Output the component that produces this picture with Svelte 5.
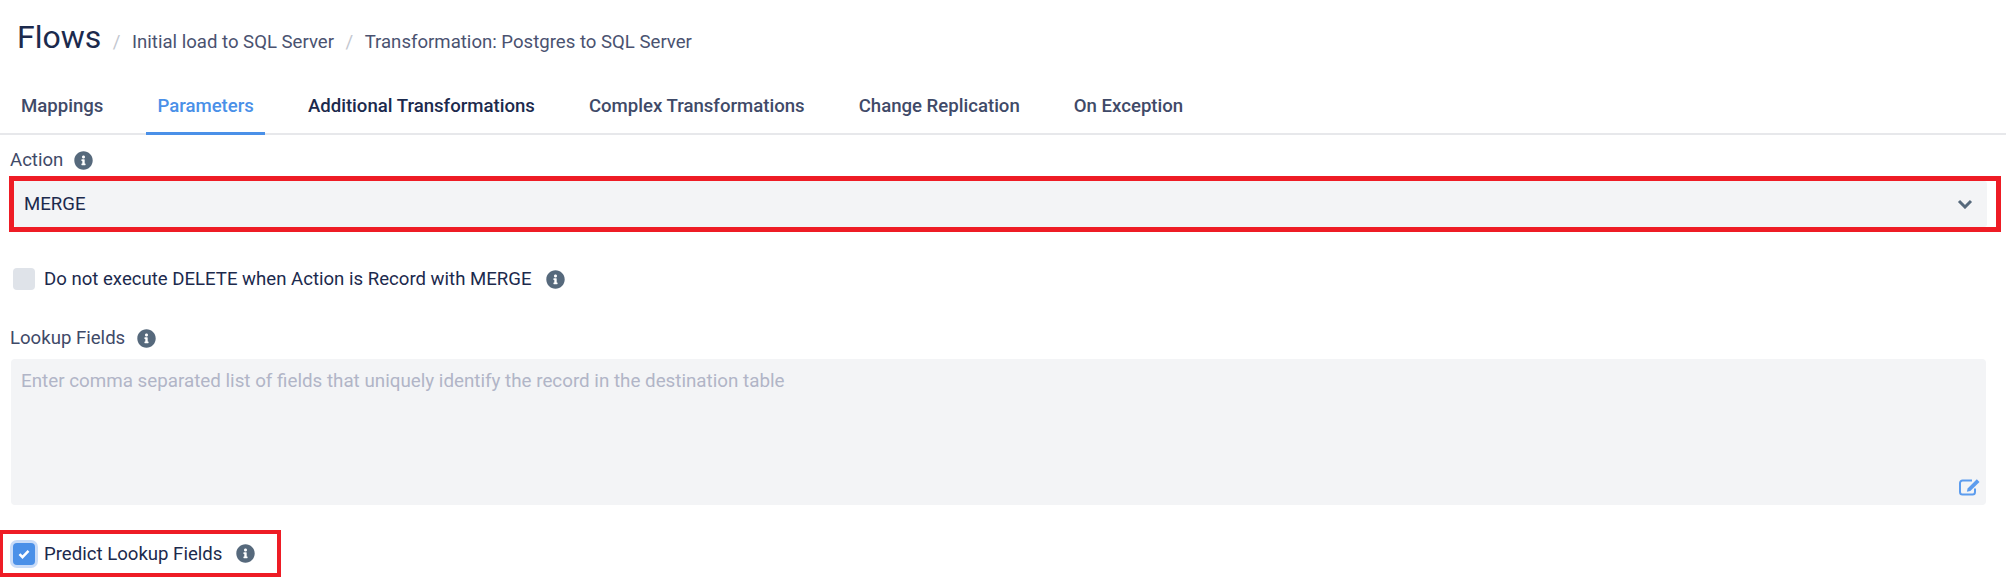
<script>
  const tabs = [
    { label: "Mappings" },
    { label: "Parameters", active: true },
    { label: "Additional Transformations", dark: true },
    { label: "Complex Transformations" },
    { label: "Change Replication" },
    { label: "On Exception" },
  ];
  const infoPath =
    "M256 8C119 8 8 119.100 8 256c0 137 111 248 248 248s248-111 248-248C504 119.100 393 8 256 8zm0 110c23.200 0 42 18.800 42 42s-18.800 42-42 42-42-18.800-42-42 18.800-42 42-42zm56 254c0 6.600-5.400 12-12 12h-88c-6.600 0-12-5.400-12-12v-24c0-6.600 5.400-12 12-12h12v-64h-12c-6.600 0-12-5.400-12-12v-24c0-6.600 5.400-12 12-12h64c6.600 0 12 5.400 12 12v100h12c6.600 0 12 5.400 12 12v24z";
</script>

{#snippet info()}
  <svg class="info" viewBox="0 0 512 512" aria-hidden="true"><path d={infoPath} /></svg>
{/snippet}

<main>
  <header class="crumbs">
    <h1>Flows</h1>
    <span class="sep">/</span>
    <span>Initial load to SQL Server</span>
    <span class="sep">/</span>
    <span>Transformation: Postgres to SQL Server</span>
  </header>

  <nav class="tabs">
    {#each tabs as tab}
      <div class="tab" class:active={tab.active} class:dark={tab.dark}>{tab.label}</div>
    {/each}
  </nav>

  <section class="form">
    <div class="label action-label">Action {@render info()}</div>
    <div class="marked action-mark">
      <div class="select">
        <span>MERGE</span>
        <svg class="chevron" viewBox="0 0 16 10" aria-hidden="true">
          <path d="M2 2l6 6 6-6" />
        </svg>
      </div>
    </div>

    <div class="check-row delete-row">
      <span class="box"></span>
      <span class="check-text">Do not execute DELETE when Action is Record with MERGE</span>
      {@render info()}
    </div>

    <div class="label lookup-label">Lookup Fields {@render info()}</div>
    <div class="textarea">
      <span class="placeholder">Enter comma separated list of fields that uniquely identify the record in the destination table</span>
      <svg class="edit" viewBox="0 0 22 18" aria-hidden="true">
        <path class="frame" d="M16 10.500V14a2.500 2.500 0 0 1-2.500 2.500H3.500A2.500 2.500 0 0 1 1 14V5a2.500 2.500 0 0 1 2.500-2.500H13" />
        <path class="pencil" d="M17.800 1.200l2.700 2.700-9.200 9.200-3.400.7.700-3.400z" />
      </svg>
    </div>

    <div class="marked predict-mark">
      <span class="box checked">
        <svg viewBox="0 0 12 10" aria-hidden="true"><path d="M1.500 5.200l3 3 6-6.400" /></svg>
      </span>
      <span class="check-text">Predict Lookup Fields</span>
      {@render info()}
    </div>
  </section>
</main>

<style>
  :global(body) {
    margin: 0;
    background: #fff;
  }

  main {
    height: 586px;
    overflow: hidden;
    font-family: Roboto, "Liberation Sans", sans-serif;
    font-size: 18.6px;
    color: #1c2a4d;
  }

  .crumbs {
    display: flex;
    align-items: baseline;
    height: 77px;
    padding: 17px 0 0 17px;
    box-sizing: border-box;
    color: #4a5270;
  }

  h1 {
    margin: 0;
    font-size: 32px;
    font-weight: 400;
    line-height: 40px;
    color: #1c2a4d;
  }

  .sep {
    margin: 0 11.5px;
    color: #c3c7d0;
  }

  .tabs {
    display: flex;
    gap: 32px;
    height: 56px;
    padding-left: 10px;
    border-bottom: 2px solid #e7e8eb;
  }

  .tab {
    padding: 1px 11px 0;
    height: 55px;
    line-height: 56px;
    font-weight: 500;
    color: #3f4a68;
    box-sizing: content-box;
  }

  .tab.dark {
    color: #1c2a4d;
  }

  .tab.active {
    color: #4a90e8;
    border-bottom: 3px solid #4a90e8;
    height: 54px;
  }

  .label {
    display: flex;
    align-items: center;
    gap: 11px;
    padding-left: 10px;
    line-height: 24px;
    font-weight: 400;
    color: #3f4a68;
  }

  .info {
    width: 19px;
    height: 19px;
    flex: none;
    fill: #56697c;
  }

  .action-label {
    margin-top: 13px;
  }

  .marked {
    border: 5px solid #ee1c25;
    box-sizing: border-box;
  }

  .action-mark {
    margin: 4px 5px 0 9px;
    height: 56px;
    padding-right: 9px;
  }

  .select {
    display: flex;
    align-items: center;
    justify-content: space-between;
    height: 46px;
    padding: 0 14px 0 10px;
    background: #f3f4f6;
    border-radius: 3px;
    color: #1c2a4d;
  }

  .chevron {
    width: 16px;
    height: 10px;
    fill: none;
    stroke: #56697c;
    stroke-width: 3;
  }

  .check-row {
    display: flex;
    align-items: center;
  }

  .delete-row {
    margin-top: 35px;
    padding-left: 13px;
    height: 24px;
  }

  .box {
    width: 22px;
    height: 22px;
    flex: none;
    box-sizing: border-box;
    border-radius: 4px;
    background: #dfe3e9;
    margin-right: 9px;
  }

  .check-text {
    color: #1c2a4d;
    margin-right: 14px;
  }

  .lookup-label {
    margin-top: 35px;
    gap: 12px;
  }

  .textarea {
    position: relative;
    margin: 9px 20px 0 11px;
    height: 146px;
    padding: 11px 10px;
    box-sizing: border-box;
    background: #f3f4f6;
    border-radius: 4px;
    font-size: 18.8px;
  }

  .placeholder {
    color: #b1b5c7;
  }

  .edit {
    position: absolute;
    right: 5px;
    bottom: 9px;
    width: 22px;
    height: 18px;
    fill: none;
  }

  .edit .frame {
    stroke: #5c9cee;
    stroke-width: 2;
  }

  .edit .pencil {
    fill: #5c9cee;
  }

  .predict-mark {
    display: flex;
    align-items: center;
    width: 281px;
    height: 47px;
    margin-top: 25px;
    padding-left: 13px;
    border-width: 4px;
    border-left-width: 3px;
  }

  .predict-mark .box {
    margin-left: -3px;
    margin-right: 9px;
  }

  .box.checked {
    display: flex;
    align-items: center;
    justify-content: center;
    background: #4a90e8;
    box-shadow: 0 0 0 3px #c9dcf8;
  }

  .box.checked svg {
    width: 12px;
    height: 10px;
    fill: none;
    stroke: #fff;
    stroke-width: 2.500;
  }
</style>
